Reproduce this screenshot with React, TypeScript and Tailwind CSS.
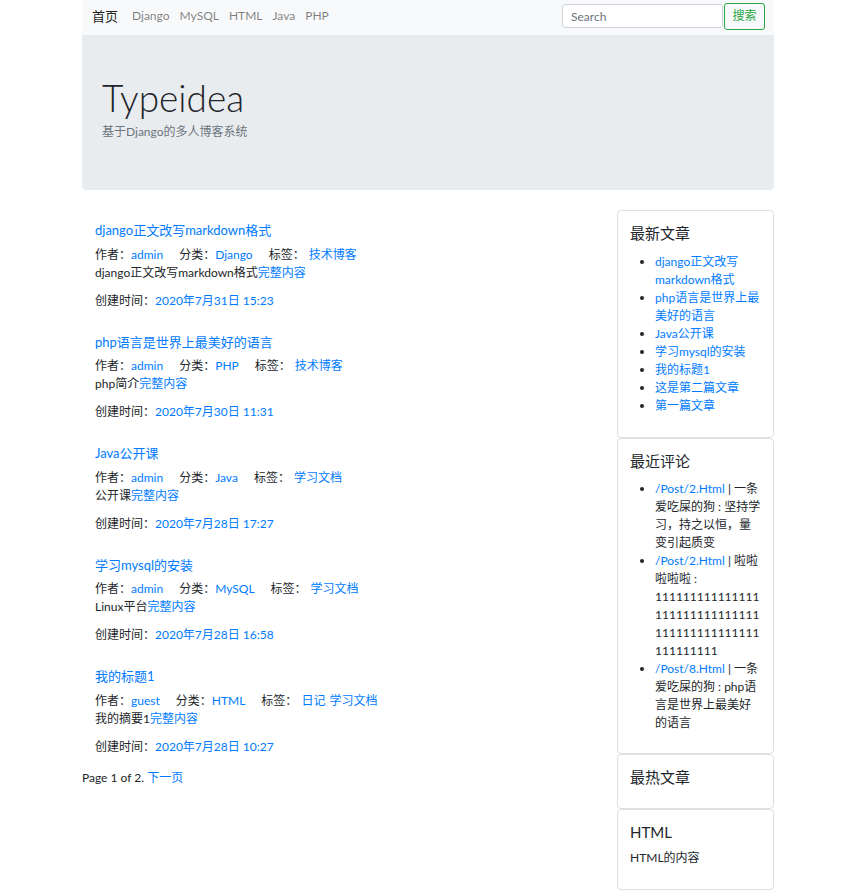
import React from 'react';

const POSTS = [
  {
    title: 'django正文改写markdown格式',
    author: 'admin',
    category: 'Django',
    tags: ['技术博客'],
    desc: 'django正文改写markdown格式',
    created: '2020年7月31日 15:23',
  },
  {
    title: 'php语言是世界上最美好的语言',
    author: 'admin',
    category: 'PHP',
    tags: ['技术博客'],
    desc: 'php简介',
    created: '2020年7月30日 11:31',
  },
  {
    title: 'Java公开课',
    author: 'admin',
    category: 'Java',
    tags: ['学习文档'],
    desc: '公开课',
    created: '2020年7月28日 17:27',
  },
  {
    title: '学习mysql的安装',
    author: 'admin',
    category: 'MySQL',
    tags: ['学习文档'],
    desc: 'Linux平台',
    created: '2020年7月28日 16:58',
  },
  {
    title: '我的标题1',
    author: 'guest',
    category: 'HTML',
    tags: ['日记', '学习文档'],
    desc: '我的摘要1',
    created: '2020年7月28日 10:27',
  },
];

const LATEST = [
  'django正文改写markdown格式',
  'php语言是世界上最美好的语言',
  'Java公开课',
  '学习mysql的安装',
  '我的标题1',
  '这是第二篇文章',
  '第一篇文章',
];

const COMMENTS = [
  { url: '/Post/2.Html', text: '一条爱吃屎的狗 : 坚持学习，持之以恒，量变引起质变' },
  { url: '/Post/2.Html', text: '啦啦啦啦啦 : ' + '1'.repeat(54) },
  { url: '/Post/8.Html', text: '一条爱吃屎的狗 : php语言是世界上最美好的语言' },
];

export default function App() {
  return (
    <div className="w-[692px] mx-auto font-['Lato','Noto_Sans_CJK_SC',sans-serif] text-[12px] leading-[18px] text-[#212529]">
      {/* Navbar */}
      <nav className="h-[35px] bg-[#f8f9fa] flex items-center pl-[10px] pr-[9px] pb-[3px]">
        <a className="text-[13px] text-black/90 mr-[14px]">首页</a>
        <div className="flex gap-[10px] text-[12px] text-black/50">
          <a>Django</a>
          <a>MySQL</a>
          <a>HTML</a>
          <a>Java</a>
          <a>PHP</a>
        </div>
        <form className="ml-auto flex items-center">
          <input
            placeholder="Search"
            className="w-[161px] h-[24px] border border-[#ced4da] rounded-[3px] bg-white px-[8px] text-[12px] placeholder:text-[#6c757d] outline-none"
          />
          <button
            type="button"
            className="ml-[1px] h-[27px] w-[41px] border border-[#28a745] rounded-[3px] text-[#28a745] text-[12px]"
          >
            搜索
          </button>
        </form>
      </nav>

      {/* Jumbotron */}
      <div className="h-[155px] bg-[#e9ecef] rounded-b-[4px] pl-[20px] pt-[39px]">
        <h1 className="text-[37px] font-light leading-[48px]">Typeidea</h1>
        <p className="mt-[1px] text-[12px] leading-[18px] text-[#6c757d]">基于Django的多人博客系统</p>
      </div>

      <div className="flex mt-[20px]">
        {/* Posts */}
        <div className="flex-1">
          {POSTS.map((post, idx) => (
            <div key={idx} className="pl-[13px] pt-[11px] pb-[12px]">
              <a className="block text-[13px] leading-[18px] text-[#007bff]">{post.title}</a>
              <div className="mt-[6.5px]">
                <span>作者：</span>
                <a className="text-[#007bff]">{post.author}</a>
                <span className="ml-[16px]">分类：</span>
                <a className="text-[#007bff]">{post.category}</a>
                <span className="ml-[16px]">标签：</span>
                {post.tags.map((tag, i) => (
                  <a key={i} className="text-[#007bff] ml-[4px]">{tag}</a>
                ))}
              </div>
              <div>
                {post.desc}
                <a className="text-[#007bff]">完整内容</a>
              </div>
              <div className="mt-[10px]">
                创建时间：<span className="text-[#007bff]">{post.created}</span>
              </div>
            </div>
          ))}
          <div className="mt-[1px]">
            Page 1 of 2. <a className="text-[#007bff]">下一页</a>
          </div>
        </div>

        {/* Sidebar */}
        <div className="w-[157px] flex flex-col">
          <div className="border border-black/[.125] rounded-[4px] px-[12px] pt-[13px] pb-[13px]">
            <h5 className="text-[15px] leading-[19px] mb-[10px]">最新文章</h5>
            <ul className="list-disc pl-[25px] mb-[9px]">
              {LATEST.map((t, i) => (
                <li key={i}>
                  <a className="text-[#007bff]">{t}</a>
                </li>
              ))}
            </ul>
          </div>
          <div className="border border-black/[.125] rounded-[4px] px-[12px] pt-[13px] pb-[13px]">
            <h5 className="text-[15px] leading-[19px] mb-[9px]">最近评论</h5>
            <ul className="list-disc pl-[25px] mb-[8px]">
              {COMMENTS.map((c, i) => (
                <li key={i} className="[overflow-wrap:anywhere]">
                  <a className="text-[#007bff]">{c.url}</a> | {c.text}
                </li>
              ))}
            </ul>
          </div>
          <div className="border border-black/[.125] rounded-[4px] px-[12px] pt-[13px] pb-[21px]">
            <h5 className="text-[15px] leading-[19px]">最热文章</h5>
          </div>
          <div className="border border-black/[.125] rounded-[4px] px-[12px] pt-[13px] pb-[22px]">
            <h5 className="text-[15px] leading-[19px] mb-[7px]">HTML</h5>
            <p>HTML的内容</p>
          </div>
        </div>
      </div>
    </div>
  );
}
